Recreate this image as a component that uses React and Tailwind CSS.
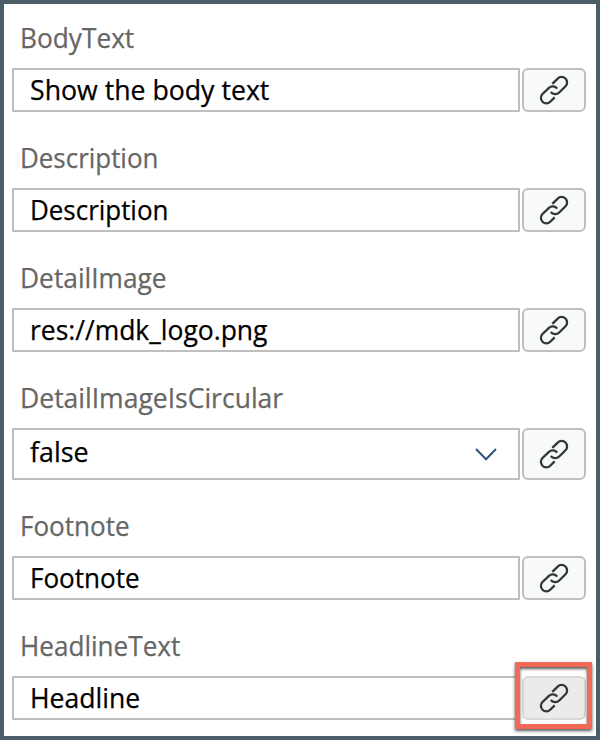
import React from "react";

const fields = [
  { label: "BodyText", labelFit: "scale-x-[0.972]", value: "Show the body text", valueFit: "scale-x-[0.988]" },
  { label: "Description", labelFit: "scale-x-[0.96]", value: "Description", valueFit: "scale-x-[0.96]" },
  { label: "DetailImage", labelFit: "scale-x-[0.975]", value: "res://mdk_logo.png", valueFit: "scale-x-[0.98]" },
  { label: "DetailImageIsCircular", labelFit: "scale-x-[0.982]", value: "false", valueFit: "scale-x-[0.995]", select: true },
  { label: "Footnote", labelFit: "scale-x-[0.965]", value: "Footnote", valueFit: "scale-x-[0.965]" },
  { label: "HeadlineText", labelFit: "scale-x-[0.967]", value: "Headline", valueFit: "scale-x-[0.984]", active: true },
];

function LinkIcon() {
  return (
    <svg width="30" height="30" viewBox="0 0 30 30" fill="none" stroke="#32363a" strokeWidth="2.3">
      <path d="M13.3 8.8 18.7 3.6A5.4 5.4 0 0 1 26.5 11.3L20.2 17.5A5.6 5.6 0 0 1 11.8 17" />
      <path d="M15.7 22.4 11.2 26.7A5.4 5.4 0 0 1 3.5 19L9.9 12.8A5.6 5.6 0 0 1 18.2 13.7" />
    </svg>
  );
}

function Field({ label, labelFit, value, valueFit, select, active }) {
  return (
    <div className="flex flex-col">
      <div className="flex h-16 items-start pl-2 pt-4">
        <span className={`origin-left whitespace-nowrap text-[27px] leading-9 text-[#666666] [-webkit-text-stroke:0.25px_#666666] ${labelFit}`}>{label}</span>
      </div>
      <div className={select ? "flex h-[52px] gap-0.5" : "flex h-11 gap-0.5"}>
        <div className={`flex w-[508px] justify-between border-2 border-[#bfbfbf] bg-white pl-4 pr-5 ${select ? "pt-1" : "pt-0.5"}`}>
          <span className={`origin-left whitespace-nowrap text-[27px] leading-9 text-black [-webkit-text-stroke:0.25px_#000000] ${valueFit}`}>{value}</span>
          {select && (
            <svg className="mt-[13px]" width="24" height="14" viewBox="0 0 24 14" fill="none" stroke="#31557a" strokeWidth="2">
              <path d="M2 2 12 12.3 22 2" />
            </svg>
          )}
        </div>
        <div className="relative flex">
          <button
            className={`flex w-16 items-center justify-center rounded-md border-2 ${active ? "border-[#d9d9d9] bg-[#ebebeb]" : "border-[#bfbfbf] bg-[#f8faf9]"}`}
          >
            <LinkIcon />
          </button>
          {active && (
            <div className="absolute -left-[7px] -top-[14px] h-[67px] w-[77px] border-[5px] border-[#f26a56] shadow-[0_2px_3px_rgba(0,0,0,0.65),inset_0_2px_3px_rgba(0,0,0,0.65)]" />
          )}
        </div>
      </div>
    </div>
  );
}

export default function App() {
  return (
    <div className="flex h-[740px] w-[600px] flex-col gap-3 overflow-hidden border-4 border-[#4b5e67] bg-white pl-2 font-['Open_Sans','Noto_Sans',sans-serif]">
      {fields.map((field) => (
        <Field key={field.label} {...field} />
      ))}
    </div>
  );
}
